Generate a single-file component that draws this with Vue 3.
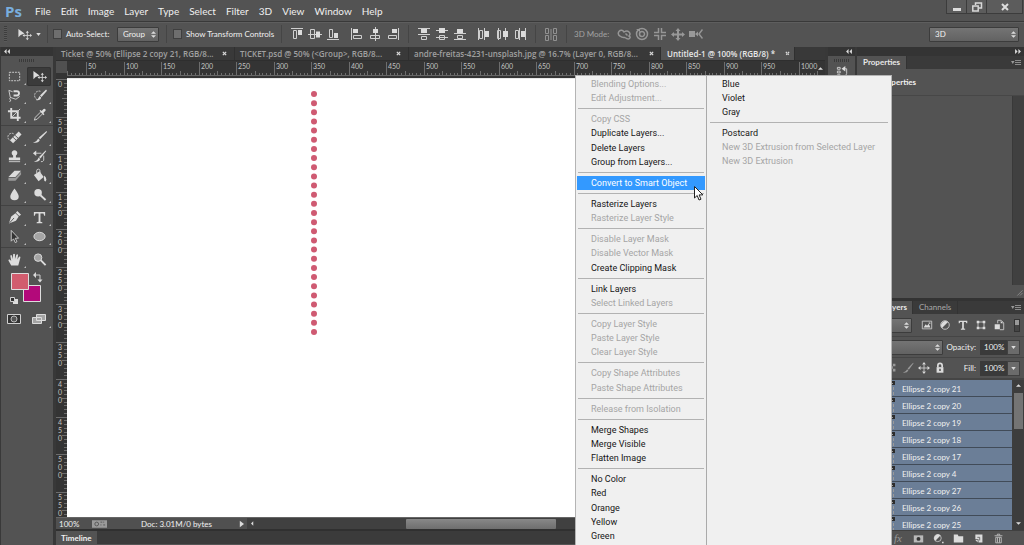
<script setup>
import { ref } from 'vue'

const menus = ['File', 'Edit', 'Image', 'Layer', 'Type', 'Select', 'Filter', '3D', 'View', 'Window', 'Help']

const docs = [
  { name: 'Ticket @ 50% (Ellipse 2 copy 21, RGB/8...', size: 'a' },
  { name: 'TICKET.psd @ 50% (<Group>, RGB/8...', size: 'b' },
  { name: 'andre-freitas-4231-unsplash.jpg @ 16.7% (Layer 0, RGB/8...', size: 'c' },
  { name: 'Untitled-1 @ 100% (RGB/8) *', size: 'd', active: true },
]

// Each icon is a list of [path, class]: f fill, s thin stroke, t thick stroke, d dashed, k dark, m muted, x detail
const toolGroups = [
  [
    { id: 'Marquee', p: [['M2.5 3.5h11v9h-11z', 'd']] },
    { id: 'Move', on: true, p: [['M1.500 2v9l2.400-2.400L8 7z', 'f'], ['M11 5.500v7M7.500 9h7', 's'], ['M11 4l1.700 2H9.300zM11 14l1.700-2H9.300zM6 9l2-1.700v3.400zM16 9l-2-1.700v3.400z', 'f']] },
    { id: 'Lasso', p: [['M6 4L2 2.500L3.500 10L9.500 12L13.500 9M4 10q-2 1-.5 2.500t-1 2', 's'], ['M7 8h3.500a2.300 2.300 0 0 0 0-4.600H7', 't']] },
    { id: 'Quick selection', p: [['M9 3.500A4.500 4.500 0 1 0 6 12.500', 'd'], ['M15 1.500L8.500 8l1.700 1.700L16 3z', 'f'], ['M8 8.500l1.900 1.900Q9 14 4 12.700Q7 12 8 8.500z', 'f']] },
    { id: 'Crop', p: [['M4.500 1V11.500h10M1 4.500H11.500V15', 't'], ['M5 11L14 2', 's']] },
    { id: 'Eyedropper', p: [['M9 5.500L3.500 11l-1 3 3-1 5.500-5.500', 's'], ['M8 4l1-.8 1.300 1.100 2-2.100q1.200-.8 2 .2t-.2 1.900l-2 2L13.300 7.700l-1 1z', 'f']] },
  ],
  [
    { id: 'Healing', p: [['M7 4a4 4 0 1 0-4 7', 'd'], ['M12.500 1.700l3 3L6.500 14l-3.400-3z', 'f'], ['M8.600 5.700l3.200 3M6.500 7.800l3.200 3', 'x']] },
    { id: 'Brush', p: [['M15.500 1L7.200 8.300l1.500 1.500L16 2z', 'f'], ['M6.500 9l1.800 1.700Q7 14.500 1 13.200Q5 12.500 6.500 9z', 'f']] },
    { id: 'Stamp', p: [['M6.500 7a3 3 0 1 1 3 0V9H14v3H2V9h4.500z', 'f'], ['M2 13.500h12', 's']] },
    { id: 'History brush', p: [['M14.500 1.500L7.500 8.500l1.500 1.500L15.200 2.200z', 'f'], ['M7 9l1.700 1.700Q7.500 14.500 2 13.200Q6 12.500 7 9z', 'f'], ['M3.500 4.500h6.500M12.500 7v5q-1 2-3 1.500', 's'], ['M1 4.500l3.500-3v6z', 'f']] },
    { id: 'Eraser', p: [['M8 3h7L9 9.500H1.500z', 'f'], ['M1.500 10.500h7.500l6-6.500v3L9 13.500H1.500z', 'm']] },
    { id: 'Bucket', p: [['M2 7.500l6-4 4.500 6L7 14z', 'f'], ['M5 6V3a1.700 1.700 0 0 1 3.500 0V8', 's'], ['M13 8q3.500 3 1.500 6.500q-2.500-.5-1.500-6.500z', 'f']] },
    { id: 'Blur', p: [['M8 1.500Q12.500 7.500 12.500 10a4.500 4 0 0 1-9 0Q3.500 7.500 8 1.500z', 'f']] },
    { id: 'Dodge', p: [['M6.500 2a4 4 0 1 1 0 8a4 4 0 0 1 0-8z', 'f'], ['M9 8.800l5.500 5', 't']] },
  ],
  [
    { id: 'Pen', p: [['M11 1l4 4-2 1.500-3.500-3.500zM9 3.500l3.500 3.500L9.500 11.500L2 14.500L4.500 7z', 'f'], ['M2.500 14L7.500 8.500', 'x']] },
    { id: 'Type', p: [['M2 2h12V6h-1l-.8-2.300H9V12.500l2 .5v1H5v-1l2-.5V3.700H3.800L3 6H2z', 'f']] },
    { id: 'Path selection', p: [['M4.500 1.500v11.500l2.500-2.500 1.800 4 1.800-.9-1.800-3.800h3.500z', 'o']] },
    { id: 'Ellipse', p: [['M8 3.500a6 4.500 0 1 1 0 9a6 4.500 0 0 1 0-9z', 'e']] },
  ],
  [
    { id: 'Hand', p: [['M4.500 14.500L1.500 9q0-1.500 1.500-1l1.500 1.500L3.500 4q1-1.500 1.800 0l1 3.500L6.500 2.500q1-1.500 2 0v5L10 3q1.300-1.200 1.800.2L11 8l1.800-3q1.500-.6 1.500.8L12 14.500z', 'f']] },
    { id: 'Zoom', last: true, p: [['M6.500 2a4 4 0 1 1 0 8a4 4 0 0 1 0-8z', 'e'], ['M9.500 9l5 5', 't']] },
  ],
]

const alignGroups = [
  [
    [['M1 1.500h12M3.500 3.500h3v8h-3z', 's'], ['M8 3h4v5H8z', 'f']],
    [['M0 7.500h14M2.500 2.500h4v9h-4z', 's'], ['M8 4.500h4v6H8z', 'f']],
    [['M1 12.500h12M3.500 2.500h3v8h-3z', 's'], ['M8 6h4v5H8z', 'f']],
  ],
  [
    [['M1.500 1v12M3.500 8.500h8v3h-8z', 's'], ['M3 2h5v4H3z', 'f']],
    [['M7.500 0v14M2.500 8.500h9v3h-9z', 's'], ['M5 2h5v4H5z', 'f']],
    [['M12.500 1v12M2.500 8.500h8v3h-8z', 's'], ['M6 2h5v4H6z', 'f']],
  ],
  [
    [['M1 1.500h12M1 7.500h12M4.500 9.500h5v3h-5z', 's'], ['M4 2h6v4H4z', 'f']],
    [['M1 3.500h12M1 10.500h12M4.500 8.500h5v4h-5z', 's'], ['M4 1h6v5H4z', 'f']],
    [['M1 6.500h12M1 12.500h12M4.500 8.500h5v3h-5z', 's'], ['M4 2h6v4H4z', 'f']],
  ],
  [
    [['M1.500 1v12M7.500 1v12M2.500 3.500h3v8h-3z', 's'], ['M8 4h4v6H8z', 'f']],
    [['M3.500 1v12M10.500 1v12M2.500 3.500h3v8h-3z', 's'], ['M8 4h5v6H8z', 'f']],
    [['M6.500 1v12M12.500 1v12M2.500 3.500h3v8h-3z', 's'], ['M8 4h4v6H8z', 'f']],
  ],
]

const modeIcons = [
  [['M3 9a3 3 0 1 1 4-4q3-2 5 0t0 4q2 1 .5 2.500T8 10.500M3 9q2 2 5 1.500M8.500 6.500l2 2', 's2']],
  [['M7 1.500a5.500 5.500 0 1 1 0 11a5.500 5.500 0 0 1 0-11zM7 4.500a2.500 2.500 0 1 1 0 5a2.500 2.500 0 0 1 0-5z', 's2'], ['M1 2h4v3z', 'f']],
  [['M5.500 1v4.500H1M8.500 1v4.500H13M5.500 13V8.500H1M8.500 13V8.500H13', 's2']],
  [['M7 4v7M2 7.500h10', 't'], ['M7 1l2.500 3h-5zM7 14l2.500-3h-5zM0 7.500l3-2.500v5zM14 7.500l-3-2.500v5z', 'f']],
  [['M0 4h6v6H0zM6 7l3-2.500v5z', 'f'], ['M13.500 2.500L10 7l3.500 4.500', 's2']],
]

const filterIcons = [
  [['M1.500 2.500h11v9h-11z', 's'], ['M3 10l2.500-4L7 8l2-2.500L11 10zM9 4h2v1.500H9z', 'f']],
  [['M7 2a5 5 0 1 1 0 10a5 5 0 0 1 0-10z', 's'], ['M10.500 3.500L3.500 10.500A5 5 0 0 1 10.500 3.500z', 'f']],
  [['M2 2h10v3h-1l-.7-1.500H8V11l1.500.5v1h-5v-1L6 11V3.500H3.700L3 5H2z', 'f']],
  [['M3.500 3.500h7v7h-7z', 's'], ['M2 2h3v3H2zM9 2h3v3H9zM2 9h3v3H2zM9 9h3v3H9z', 'f']],
  [['M5.500 5V1.500h4l3 3v8H8', 's'], ['M2 6h6v6H2zM9 2v3h3z', 'f']],
]

const lockIcons = [
  [['M2 2h3v3H2zM8 2h3v3H8zM5 5h3v3H5zM2 8h3v3H2zM8 8h3v3H8z', 'm']],
  [['M13 1L6.500 7.500 8 9l5.500-7.500zM6 8.500L7.500 10Q6 13 1 12.500 5 11.500 6 8.500z', 'm']],
  [['M7 3v8M3 7h8', 's'], ['M7 0l2.200 3H4.800zM7 14l2.200-3H4.800zM0 7l3-2.200v4.400zM14 7l-3-2.200v4.400z', 'f']],
  [['M4.500 6V4a2.500 2.500 0 0 1 5 0v2', 't'], ['M3 6h8v6.500H3z', 'f'], ['M6.300 8h1.400v2.500H6.300z', 'k']],
]

const footIcons = [
  { id: 'Mask', dim: true, p: [['M1 3h12v9H1z', 'f'], ['M7 5a2.500 2.500 0 1 1 0 5a2.500 2.500 0 0 1 0-5z', 'k']] },
  { id: 'Adjustment', p: [['M6 2a4.500 4.500 0 1 1 0 9a4.500 4.500 0 0 1 0-9z', 's'], ['M9.500 3.300L3 10A4.500 4.500 0 0 1 9.500 3.300zM11.500 11h2v2h-2z', 'f']] },
  { id: 'Group', p: [['M1 2h5l1 2h6V12H1z', 'f']] },
  { id: 'New layer', p: [['M3 2h9v10H7V8H3z', 'f'], ['M3 9l3 3V9z', 'f'], ['M5.500 5.500h3v4', 'x']] },
  { id: 'Delete', p: [['M3.500 5.500h7v7h-7zM2 3.500h10M5.500 3V1.500h3V3M5.700 6v6M8.300 6v6', 's']] },
]

const layers = ['21', '20', '19', '18', '17', '4', '27', '26', '25'].map((n) => `Ellipse 2 copy ${n}`)

// Context menu groups; a leading "-" marks a disabled entry
const menuA = [
  ['-Blending Options...', '-Edit Adjustment...'],
  ['-Copy CSS', 'Duplicate Layers...', 'Delete Layers', 'Group from Layers...'],
  ['Convert to Smart Object'],
  ['Rasterize Layers', '-Rasterize Layer Style'],
  ['-Disable Layer Mask', '-Disable Vector Mask', 'Create Clipping Mask'],
  ['Link Layers', '-Select Linked Layers'],
  ['-Copy Layer Style', '-Paste Layer Style', '-Clear Layer Style'],
  ['-Copy Shape Attributes', '-Paste Shape Attributes'],
  ['-Release from Isolation'],
  ['Merge Shapes', 'Merge Visible', 'Flatten Image'],
  ['No Color', 'Red', 'Orange', 'Yellow', 'Green'],
]
const menuB = [
  ['Blue', 'Violet', 'Gray'],
  ['Postcard', '-New 3D Extrusion from Selected Layer', '-New 3D Extrusion'],
]
const flatten = (groups) =>
  groups.flatMap((g, i) => [
    ...(i ? [{ sep: true }] : []),
    ...g.map((t) => ({ text: t.replace(/^-/, ''), off: t.startsWith('-'), hot: t.startsWith('Convert') })),
  ])
const columns = [flatten(menuA), flatten(menuB)]

// Ruler marks: ten steps make 50 document units
const STEP = 75 / 20
const hTicks = Array.from({ length: 205 }, (_, i) => ({
  x: Math.round(19 + (i - 5) * STEP),
  h: (i + 5) % 10 === 0 ? 14 : i % 5 === 0 ? 5 : 3,
})).filter((t) => t.x >= 0)
const hLabels = Array.from({ length: 20 }, (_, i) => ({ x: Math.round(19 + i * 10 * STEP), t: (i + 1) * 50 }))
const vTicks = Array.from({ length: 117 }, (_, i) => ({
  y: Math.round(1 + i * STEP),
  w: i % 10 === 0 ? 11 : i % 5 === 0 ? 5 : 3,
}))
const vLabels = Array.from({ length: 12 }, (_, i) => ({ y: Math.round(1 + i * 10 * STEP), t: String(i * 50).split('') }))

const dots = Array.from({ length: 27 }, (_, i) => 3 + (i * 238) / 26)

const autoSelect = ref(false)
const transform = ref(false)
const opacity = ref('100%')
const fill = ref('100%')
</script>

<template>
  <div class="app">
    <header class="menubar">
      <span class="logo">Ps</span>
      <nav class="menus"><button v-for="m in menus" :key="m">{{ m }}</button></nav>
      <div class="win">
        <button aria-label="Minimize"><svg viewBox="0 0 12 12"><path class="f" d="M2 7h8v3H2z" /></svg></button>
        <button aria-label="Restore"><svg viewBox="0 0 12 12"><path class="s2" d="M4.500 4V2h6v5H8M1.800 5h5.400v5H1.800z" /></svg></button>
        <button class="close" aria-label="Close"><svg viewBox="0 0 12 12"><path class="t" d="M3 3l6 6M9 3l-6 6" /></svg></button>
      </div>
    </header>

    <div class="options">
      <i class="grip"></i>
      <svg class="cur" viewBox="0 0 16 16"><path v-for="(q, k) in toolGroups[0][1].p" :key="k" :class="q[1]" :d="q[0]" /></svg>
      <svg class="caret" viewBox="0 0 6 4"><path class="f" d="M0 0h6L3 4z" /></svg>
      <i class="vsep"></i>
      <label class="check"><input v-model="autoSelect" type="checkbox" />Auto-Select:</label>
      <span class="pick group"><select aria-label="Auto-select target"><option>Group</option></select><svg viewBox="0 0 6 8"><path class="f" d="M0 3l3-3 3 3zM0 5l3 3 3-3z" /></svg></span>
      <i class="vsep"></i>
      <label class="check show"><input v-model="transform" type="checkbox" />Show Transform Controls</label>
      <template v-for="(g, gi) in alignGroups" :key="gi">
        <i v-if="gi % 2 === 0" class="vsep"></i>
        <div class="aligns">
          <button v-for="(ic, k) in g" :key="k" aria-label="Align">
            <svg viewBox="0 0 14 14"><path v-for="(q, n) in ic" :key="n" :class="q[1]" :d="q[0]" /></svg>
          </button>
        </div>
      </template>
      <i class="vsep"></i>
      <div class="aligns dim"><button aria-label="Auto-align"><svg viewBox="0 0 14 14"><path class="s" d="M1.500 1.500h3v5h-3zM1.500 8.500h3v5h-3zM9.500 1.500h3v5h-3zM9.500 8.500h3v5h-3zM7 2v11" /></svg></button></div>
      <i class="vsep"></i>
      <span class="mode">3D Mode:</span>
      <div class="aligns dim">
        <button v-for="(ic, k) in modeIcons" :key="k" aria-label="3D mode">
          <svg viewBox="0 0 14 14"><path v-for="(q, n) in ic" :key="n" :class="q[1]" :d="q[0]" /></svg>
        </button>
      </div>
      <span class="pick space"><select aria-label="Workspace"><option>3D</option></select><svg viewBox="0 0 6 8"><path class="f" d="M0 3l3-3 3 3zM0 5l3 3 3-3z" /></svg></span>
    </div>

    <div class="work">
      <aside class="tools">
        <div class="head left"><svg viewBox="0 0 7 6"><path class="f" d="M3 0v6L0 3zM7 0v6L4 3z" /></svg></div>
        <div class="dots"></div>
        <div v-for="(g, gi) in toolGroups" :key="gi" class="tgroup">
          <button v-for="t in g" :key="t.id" :class="{ on: t.on }" :aria-label="t.id">
            <svg viewBox="0 0 16 16"><path v-for="(q, k) in t.p" :key="k" :class="q[1]" :d="q[0]" /></svg>
            <i v-if="!t.on && !t.last" class="more"></i>
          </button>
        </div>
        <svg class="swatches" viewBox="0 0 40 34">
          <path class="bg" d="M14.500 14.500h17v16h-17z" />
          <path class="fg" d="M2.500 2.500h17v16h-17z" />
          <path class="f" d="M24 4l3-3v6zM33.500 8.500h-5l2.500 3z" />
          <path class="s" d="M26 4h5v5" />
          <path class="f" d="M4 28h5v5H4z" />
          <path class="kk" d="M1.500 26.500h4v4h-4z" />
        </svg>
        <div class="modes">
          <button aria-label="Quick mask"><svg viewBox="0 0 14 12"><path class="kk" d="M.5 1.500h13v9H.5z" /><path class="e2" d="M7 3a3 3 0 1 1 0 6a3 3 0 0 1 0-6z" /></svg></button>
          <button aria-label="Screen mode"><svg viewBox="0 0 14 12"><path class="e" d="M.5 4.500h9v6h-9zM4.500 1.500h9v6h-9z" /></svg><i class="more"></i></button>
        </div>
      </aside>

      <main class="doc">
        <div class="tabs">
          <div v-for="d in docs" :key="d.name" class="tab" :class="[d.size, { active: d.active }]">
            <span>{{ d.name }}</span>
            <button aria-label="Close tab"><svg viewBox="0 0 6 6"><path class="s2" d="M1 1l4 4M5 1L1 5" /></svg></button>
          </div>
        </div>
        <div class="hrow">
          <i class="corner"></i>
          <svg class="hruler">
            <path v-for="t in hTicks" :key="t.x" class="tick" :d="`M${t.x}.5 ${15 - t.h}v${t.h}`" />
            <text v-for="l in hLabels" :key="l.t" :x="l.x + 2" y="8">{{ l.t }}</text>
          </svg>
          <svg class="up" viewBox="0 0 6 4"><path class="f" d="M0 3h6L3 0z" /></svg>
        </div>
        <div class="vrow">
          <svg class="vruler">
            <path v-for="t in vTicks" :key="t.y" class="tick" :d="`M${11 - t.w} ${t.y}.5h${t.w}`" />
            <g v-for="l in vLabels" :key="l.y"><text v-for="(c, k) in l.t" :key="k" x="2" :y="l.y + 8 + k * 8">{{ c }}</text></g>
          </svg>
          <div class="canvas">
            <svg class="art" viewBox="0 0 6 244"><circle v-for="y in dots" :key="y" cx="3" :cy="y" r="3" /></svg>
          </div>
        </div>
        <div class="status">
          <div class="info">
            <span class="pct">100%</span>
            <svg class="snap" viewBox="0 0 16 8"><path class="m" d="M0 0h16v8H0z" /><path class="x" d="M5 2a2 2 0 1 1 0 4a2 2 0 0 1 0-4zM9 2h2M12 5h2M9 5h1M12 2h1" /></svg>
            <span class="size">Doc: 3.01M/0 bytes</span>
            <svg class="play" viewBox="0 0 6 8"><path class="f" d="M1 0l5 4-5 4z" /></svg>
          </div>
          <div class="hscroll">
            <svg viewBox="0 0 4 6"><path class="f" d="M3 0v6L0 3z" /></svg>
            <i></i>
          </div>
        </div>
        <div class="timeline"><span>Timeline</span></div>
      </main>

      <aside class="strip">
        <div class="head"><svg viewBox="0 0 7 6"><path class="f" d="M3 0v6L0 3zM7 0v6L4 3z" /></svg></div>
        <div class="dots"></div>
        <svg class="hist" viewBox="0 0 14 14"><path class="s" d="M1.500 1.500h3v2h-3zM1.500 5.500h3v2h-3zM1.500 9.500h3v2h-3zM8 3h3.500v5q0 3-4 3" /><path class="f" d="M6 3l4-3v6z" /></svg>
      </aside>

      <aside class="panels">
        <div class="head"><svg viewBox="0 0 7 6"><path class="f" d="M0 0l3 3-3 3zM4 0l3 3-3 3z" /></svg></div>
        <div class="ptabs"><span class="sel">Properties</span><svg viewBox="0 0 10 6"><path class="m" d="M0 1h3.500L1.800 4z" /><path class="g" d="M4 .5h6M4 2.500h6M4 4.500h6" /></svg></div>
        <section class="props">
          <h2>Properties</h2>
          <div class="pbody"><i></i></div>
          <svg class="resize" viewBox="0 0 8 8"><path class="g" d="M7.500 1.500l-6 6M7.500 4.500l-3 3" /></svg>
        </section>
        <div class="ptabs lay"><span class="sel">Layers</span><span>Channels</span><svg viewBox="0 0 10 6"><path class="m" d="M0 1h3.500L1.800 4z" /><path class="g" d="M4 .5h6M4 2.500h6M4 4.500h6" /></svg></div>
        <section class="layers">
          <div class="lrow filter">
            <span class="pick kind"><select aria-label="Filter kind"></select><svg viewBox="0 0 6 8"><path class="f" d="M0 3l3-3 3 3zM0 5l3 3 3-3z" /></svg></span>
            <div class="aligns"><button v-for="(ic, k) in filterIcons" :key="k" aria-label="Filter"><svg viewBox="0 0 14 14"><path v-for="(q, n) in ic" :key="n" :class="q[1]" :d="q[0]" /></svg></button></div>
            <i class="toggle"></i>
          </div>
          <div class="lrow">
            <span class="pick blend"><select aria-label="Blend mode"></select><svg viewBox="0 0 6 8"><path class="f" d="M0 3l3-3 3 3zM0 5l3 3 3-3z" /></svg></span>
            <label class="num">Opacity: <input v-model="opacity" /></label>
            <button class="drop" aria-label="Opacity slider"><svg viewBox="0 0 6 4"><path class="f" d="M0 0h6L3 4z" /></svg></button>
          </div>
          <div class="lrow lock">
            <div class="aligns locks"><button v-for="(ic, k) in lockIcons" :key="k" aria-label="Lock"><svg viewBox="0 0 14 14"><path v-for="(q, n) in ic" :key="n" :class="q[1]" :d="q[0]" /></svg></button></div>
            <label class="num">Fill: <input v-model="fill" /></label>
            <button class="drop" aria-label="Fill slider"><svg viewBox="0 0 6 4"><path class="f" d="M0 0h6L3 4z" /></svg></button>
          </div>
          <div class="listing">
            <ul><li v-for="l in layers" :key="l"><svg viewBox="0 0 3 16"><path class="k" d="M0 0h3v4H0z" /><path class="m" d="M0 2h1v1H0zM1 6h1v3H1zM1 11h1v3H1z" /></svg>{{ l }}</li></ul>
            <div class="vscroll">
              <svg viewBox="0 0 6 4"><path class="f" d="M0 3h6L3 0z" /></svg><i></i><svg viewBox="0 0 6 4"><path class="f" d="M0 0h6L3 3z" /></svg>
            </div>
          </div>
          <footer class="foot">
            <button class="fx">fx</button>
            <button v-for="f in footIcons" :key="f.id" :class="{ dim: f.dim }" :aria-label="f.id"><svg viewBox="0 0 14 14"><path v-for="(q, n) in f.p" :key="n" :class="q[1]" :d="q[0]" /></svg></button>
          </footer>
        </section>
      </aside>
    </div>

    <div class="context" role="menu">
      <div v-for="(c, ci) in columns" :key="ci" class="col">
        <template v-for="(m, k) in c" :key="k">
          <hr v-if="m.sep" />
          <button v-else role="menuitem" :disabled="m.off" :class="{ hot: m.hot }">{{ m.text }}</button>
        </template>
      </div>
    </div>

    <svg class="pointer" viewBox="0 0 10 15"><path d="M.5 .5v11.500l2.700-2.500 1.800 4.500 2-.8-1.900-4.300h3.800z" /></svg>
  </div>
</template>

<style>
body { margin: 0; background: #3a3a3a; }
</style>

<style scoped>
* { box-sizing: border-box; }
.app {
  position: relative; display: flex; flex-direction: column; height: 100vh; overflow: hidden;
  background: #383838; color: #f0f0f0; font: 8px/10px Lato, "Open Sans", sans-serif;
}
button { padding: 0; border: 0; background: none; color: inherit; font: inherit; }
select, input { color: inherit; font: inherit; }
svg { display: block; flex: none; }
.f { fill: #dcdcdc; }
.m { fill: #9a9a9a; }
.k { fill: #2c2c2c; }
.s { fill: none; stroke: #cfcfcf; stroke-width: 1; }
.s2 { fill: none; stroke: #d8d8d8; stroke-width: 1.5; }
.g { fill: none; stroke: #8c8c8c; stroke-width: 1; }
.t { fill: none; stroke: #dcdcdc; stroke-width: 2; }
.d { fill: none; stroke: #cfcfcf; stroke-width: 1; stroke-dasharray: 2 1; }
.x { fill: none; stroke: #555; stroke-width: 1; }
.o { fill: #333; stroke: #ccc; stroke-width: 1; }
.e { fill: #a4a4a4; stroke: #ddd; stroke-width: 1; }
.kk { fill: #333; stroke: #d0d0d0; stroke-width: 1; }
.e2 { fill: #555; stroke: #bbb; stroke-width: 1; }

.menubar { display: flex; align-items: center; height: 22px; flex: none; background: #535353; border-bottom: 1px solid #393939; }
.logo { width: 30px; padding-left: 5px; color: #79aede; font: bold 15px/20px "Open Sans", sans-serif; }
.menus { display: flex; flex: 1; font: 10px/20px Lato, sans-serif; }
.menus button { padding: 0 5px; }
.win { display: flex; align-self: flex-start; margin-right: 1px; border: 1px solid #3c3c3c; border-top: 0; background: #5c5c5c; }
.win button { display: grid; place-items: center; width: 20px; height: 13px; border-right: 1px solid #3c3c3c; }
.win .close { width: 35px; border: 0; }
.win svg { width: 12px; height: 12px; }

.options { display: flex; align-items: center; height: 25px; flex: none; padding-bottom: 2px; background: #535353; border-top: 1px solid #5e5e5e; }
.grip { width: 3px; height: 16px; margin: 0 10px 0 4px; background: repeating-linear-gradient(#3d3d3d 0 1px, #5a5a5a 1px 2px); }
.cur { width: 15px; height: 15px; }
.caret { width: 5px; height: 3px; margin: 0 6px 0 4px; }
.vsep { width: 1px; height: 18px; background: #454545; flex: none; margin: 0 6px; }
.caret + .vsep { margin: 0 5px 0 0; }
.check { display: flex; align-items: center; gap: 4px; width: 64px; white-space: nowrap; }
.check.show { width: 102px; }
.check input { appearance: none; width: 9px; height: 10px; margin: 0; flex: none; border: 1px solid #3f3f3f; background: #6e6e6e; }
.pick { display: flex; align-items: center; position: relative; }
.pick select { appearance: none; width: 100%; height: 15px; padding: 0 5px; border: 1px solid #3c3c3c; border-radius: 1px; background: linear-gradient(#747474, #626262); }
.pick svg { position: absolute; right: 3px; width: 5px; height: 7px; }
.pick.group { width: 42px; margin-right: 1px; }
.pick.space { width: 90px; margin: 0 5px 0 auto; }
.aligns { display: flex; margin-right: 6px; }
.aligns + .aligns { margin-right: 0; }
.aligns button { display: grid; place-items: center; width: 18px; height: 18px; }
.aligns svg { width: 12px; height: 12px; }
.options .aligns svg { width: 14px; height: 14px; }
.aligns.dim { margin: 0; opacity: .5; }
.mode { width: 42px; padding-left: 1px; color: #a2a2a2; }

.work { display: flex; flex: 1; min-height: 0; }
.head { display: flex; align-items: center; justify-content: flex-end; height: 9px; flex: none; padding: 0 3px; background: #343434; }
.head.left { justify-content: flex-start; }
.head svg { width: 6px; height: 5px; }
.tools { display: flex; flex-direction: column; width: 53px; flex: none; border-left: 1px solid #393939; background: #535353; }
.dots { width: 15px; height: 3px; flex: none; margin: 3px auto 5px; background: repeating-linear-gradient(90deg, #3a3a3a 0 1px, #555 1px 2px); }
.tools .dots { margin-left: 18px; }
.tgroup { display: grid; grid-template-columns: 24px 24px; column-gap: 1px; grid-auto-rows: 19px; padding: 0 1px 1px; margin-bottom: 2px; border-bottom: 1px solid #424242; }
.tgroup:nth-of-type(6) { border: 0; margin: 0; }
.tgroup button, .modes button { position: relative; display: grid; place-items: center; }
.tgroup .on { background: #3b3b3b; border-radius: 2px; box-shadow: 0 0 0 1px #333 inset; }
.tgroup svg { width: 15px; height: 15px; }
.more { position: absolute; right: 0; bottom: 1px; border: 1px solid #bbb; border-left-color: transparent; border-top-color: transparent; }
.swatches { width: 40px; height: 34px; margin: 1px 0 0 8px; }
.modes { display: grid; grid-template-columns: 24px 24px; column-gap: 1px; margin: 4px 0 0 1px; height: 20px; }
.modes svg { width: 14px; height: 12px; }
.bg { fill: #b3097a; stroke: #ddd; }
.fg { fill: #d15c6e; stroke: #ddd; }

.doc { display: flex; flex-direction: column; flex: 1; min-width: 0; margin: 0 3px; background: #343434; }
.tabs { display: flex; height: 14px; flex: none; border-bottom: 1px solid #2e2e2e; background: #393939; color: #a0a0a0; font: 600 8px/14px "Open Sans", sans-serif; }
.tab { display: flex; align-items: center; justify-content: space-between; padding: 0 7px 0 5px; flex: none; white-space: nowrap; border-right: 1px solid #303030; }
.tab.a { width: 179px; }
.tab.b { width: 174px; }
.tab.c { width: 252px; padding-right: 6px; }
.tab.d { width: 134px; padding: 0 4px 0 6px; }
.tab.active { background: #535353; color: #e8e8e8; }
.tab svg { width: 5px; height: 5px; }
.hrow { display: flex; height: 17px; flex: none; }
.corner { width: 11px; height: 12px; background: #505050; }
.hruler { flex: 1; height: 15px; overflow: hidden; border-bottom: 1px solid #666; }
.up { width: 5px; height: 4px; margin: 6px 2px 0 0; }
.tick { stroke: #6d6d6d; }
text { fill: #c2c2c2; font: 7px Lato, sans-serif; }
.vrow { display: flex; flex: 1; min-height: 0; }
.vruler { width: 11px; height: 100%; }
.canvas { flex: 1; background: #fff; border-top: 1px solid #e8e8e8; overflow: hidden; }
.art { width: 6px; height: 244px; margin: 12px 0 0 244px; fill: #cf5a72; }
.status { display: flex; height: 14px; flex: none; border-top: 1px solid #666; border-bottom: 2px solid #303030; }
.info { display: flex; align-items: center; width: 191px; flex: none; padding-left: 3px; background: #505050; }
.pct { width: 33px; }
.snap { width: 15px; height: 8px; }
.size { flex: 1; padding-left: 34px; }
.play { width: 5px; height: 8px; margin-right: 3px; }
.hscroll { display: flex; align-items: center; flex: 1; background: #404040; }
.hscroll svg { width: 3px; height: 5px; margin-left: 4px; }
.hscroll i { width: 26%; height: 10px; margin-left: 152px; background: linear-gradient(#888, #6e6e6e); border-radius: 1px; }
.timeline { display: flex; height: 14px; flex: none; background: #3b3b3b; border-bottom: 1px solid #555; font-weight: bold; }
.timeline span { padding: 2px 5px 0; width: 41px; background: #535353; }

.strip { display: flex; flex-direction: column; width: 27px; flex: none; background: #535353; }
.strip .dots { margin-bottom: 4px; }
.hist { width: 13px; height: 13px; margin-left: 8px; }
.panels { display: flex; flex-direction: column; width: 167px; flex: none; margin-left: 2px; background: #535353; }
.ptabs { display: flex; height: 13px; flex: none; background: #3a3a3a; color: #a8a8a8; line-height: 13px; }
.ptabs span { padding: 0 6px; border-right: 1px solid #333; }
.ptabs .sel { background: #535353; color: #e8e8e8; font-weight: bold; }
.ptabs svg { width: 10px; height: 6px; margin: 4px 3px 0 auto; }
.ptabs.lay .sel { padding: 0 5px 0 27px; }
.props { display: flex; flex-direction: column; flex: 1; min-height: 0; border-bottom: 3px solid #333; }
.props h2 { margin: 0; padding: 0 0 0 22px; height: 27px; flex: none; border-bottom: 1px solid #474747; font: bold 8px/27px Lato, sans-serif; }
.pbody { display: flex; justify-content: flex-end; flex: 1; }
.pbody i { width: 12px; background: #404040; border-left: 1px solid #393939; }
.resize { width: 7px; height: 7px; margin: 4px 1px 2px auto; }
.layers { display: flex; flex-direction: column; height: 231px; flex: none; }
.lrow { display: flex; align-items: center; height: 21px; flex: none; padding-right: 4px; border-bottom: 1px solid #454545; }
.lrow.filter { height: 23px; }
.kind { width: 55px; margin-right: 6px; }
.filter .aligns { margin: 0 auto 0 0; }
.toggle { width: 6px; height: 13px; border: 1px solid #333; background: linear-gradient(#999 50%, #444 50%); }
.blend { width: 86px; }
.num { display: flex; align-items: center; gap: 4px; margin-left: auto; }
.num input { width: 27px; height: 15px; padding: 0 0 0 4px; border: 0; background: #3a3a3a; }
.drop { display: grid; place-items: center; width: 13px; height: 15px; border: 1px solid #404040; background: #6b6b6b; }
.drop svg { width: 5px; height: 3px; }
.locks { margin: 0 0 0 27px; }
.locks button { width: 16px; }
.listing { display: flex; flex: 1; min-height: 0; padding-top: 1px; background: #454545; }
.listing ul { flex: 1; margin: 0; padding: 0; list-style: none; overflow: hidden; background: #6b7e97; }
.listing li { display: flex; align-items: center; height: 17px; padding: 1px 0 0 35px; border-bottom: 1px solid #414b58; }
.listing li svg { width: 3px; height: 16px; margin-right: 7px; }
.vscroll { display: flex; flex-direction: column; align-items: center; width: 12px; padding: 4px 0; background: #3d3d3d; }
.vscroll svg { width: 5px; height: 4px; }
.vscroll i { width: 9px; height: 36px; margin: 5px 0 auto; background: #747474; }
.foot { display: flex; height: 15px; flex: none; padding-left: 31px; border-top: 1px solid #404040; }
.foot button { display: grid; place-items: center; width: 20px; }
.foot svg { width: 11px; height: 11px; }
.foot .fx { color: #999; font: italic 11px/13px "Liberation Serif", serif; }
.foot .dim { opacity: .75; }

.context { position: absolute; top: 75px; bottom: 0; left: 575px; display: flex; width: 317px; background: #f0f0f0; border: solid #b4b4b4; border-width: 1px 1px 0; font: 9px/14px Roboto, sans-serif; color: #161616; }
.col { display: flex; flex-direction: column; }
.col:first-child { width: 131px; padding: 1px 1px 2px; border-right: 1px solid #aaa; }
.col:last-child { flex: 1; padding: 1px 2px 2px; }
.col button { flex: 1 1 14px; padding-left: 14px; text-align: left; }
.col:last-child button { flex: none; padding-left: 13px; }
.col button:disabled { color: #a5a5a5; }
.col .hot { background: #3399ff; color: #fff; }
.col hr { flex: none; width: calc(100% - 2px); height: 1px; margin: 3px 0; border: 0; background: #b2b2b2; align-self: center; }
.pointer { position: absolute; left: 694px; top: 186px; width: 10px; height: 15px; }
.pointer path { fill: #fff; stroke: #222; }
</style>
